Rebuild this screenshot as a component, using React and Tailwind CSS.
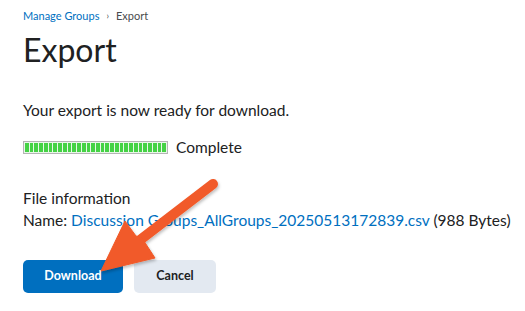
import React from 'react'

const segments = Array.from({ length: 30 })

function ProgressBar() {
  return (
    <div className="flex h-[13px] w-[145px] gap-[1px] border border-[#b4b4b4] bg-[#e8f7e8] p-[1px]">
      {segments.map((_, i) => (
        <div key={i} className="h-full flex-1 bg-[#45d245]" />
      ))}
    </div>
  )
}

function Arrow() {
  return (
    <svg
      className="pointer-events-none absolute left-0 top-0"
      width="525"
      height="311"
      viewBox="0 0 525 311"
    >
      <defs>
        <filter id="sh" x="-20%" y="-20%" width="140%" height="140%">
          <feDropShadow dx="1" dy="2" stdDeviation="1.5" floodColor="#000" floodOpacity="0.25" />
        </filter>
      </defs>
      <g filter="url(#sh)" fill="#f15a29" stroke="#f15a29">
        <line x1="213" y1="184" x2="140" y2="240" strokeWidth="10" strokeLinecap="round" />
        <polygon points="101,271 125,221 136,236 142,238 155,258" strokeWidth="1" strokeLinejoin="round" />
      </g>
    </svg>
  )
}

export default function App() {
  return (
    <div className="relative h-[311px] w-[525px] overflow-hidden bg-white font-['Lato','Noto_Sans',sans-serif] text-[#202122]">
      <div className="pl-[23px] pt-[8px]">
        <nav className="flex items-center gap-[7px] text-[11px] leading-[16px]">
          <span className="text-[#006fbf]">Manage Groups</span>
          <span className="text-[9px] text-[#494c4e]">›</span>
          <span className="text-[#494c4e]">Export</span>
        </nav>

        <h1 className="mt-[7px] text-[32px] leading-[38px] font-normal">Export</h1>

        <p className="mt-[31px] text-[15.5px] leading-[20px]">Your export is now ready for download.</p>

        <div className="mt-[17px] flex items-center gap-[8px]">
          <ProgressBar />
          <span className="text-[15.5px] leading-[20px]">Complete</span>
        </div>

        <div className="mt-[30px] text-[15.5px] leading-[22px]">
          <div>File information</div>
          <div>
            Name: <span className="text-[#006fbf]">Discussion Groups_AllGroups_20250513172839.csv</span> (988 Bytes)
          </div>
        </div>

        <div className="mt-[29px] flex gap-[11px]">
          <button className="h-[33px] w-[100px] rounded-[5px] bg-[#006fbf] text-[12.5px] font-bold text-white">
            Download
          </button>
          <button className="h-[33px] w-[82px] rounded-[5px] bg-[#e3e9f1] text-[12.5px] font-bold text-[#202122]">
            Cancel
          </button>
        </div>
      </div>
      <Arrow />
    </div>
  )
}
